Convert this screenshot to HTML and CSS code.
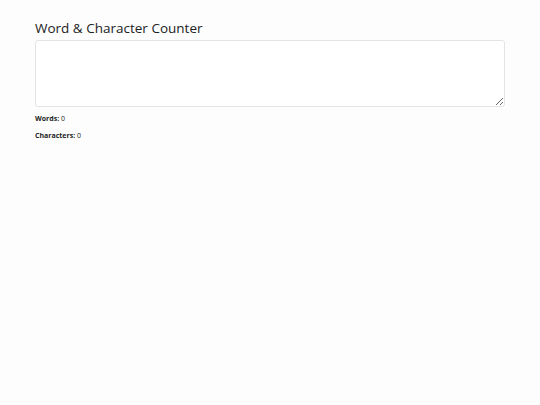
FILE: index.html
```html
<!DOCTYPE html>
<html>
<head>
    <link rel="stylesheet" href="styles.css">
</head>
<body>
    <div class="container">
        <h1 class="title">Word &amp; Character Counter</h1>
        <textarea id="text_in" class="text_box"></textarea>
        <p class="stat"><strong>Words:</strong> <span id="n_words">0</span></p>
        <p class="stat"><strong>Characters:</strong> <span id="n_chars">0</span></p>
    </div>
</body>
</html>
```

FILE: styles.css
```css
body {
    font-family: 'Open Sans', sans-serif;
    margin: 0;
    background-color: #fdfdfd;
    color: #333;
}

.container {
    padding: 19px 35px;
}

.title {
    font-size: 13.5px;
    font-weight: normal;
    margin: 0 0 3px 0;
    line-height: 18px;
    color: #222;
}

.text_box {
    display: block;
    box-sizing: border-box;
    width: 100%;
    height: 67px;
    border: 1px solid #e4e4e4;
    border-radius: 3px;
    background-color: #fff;
    font-family: inherit;
    resize: vertical;
}

.stat {
    font-size: 7px;
    margin: 6px 0;
    line-height: 11px;
    color: #222;
}
```
